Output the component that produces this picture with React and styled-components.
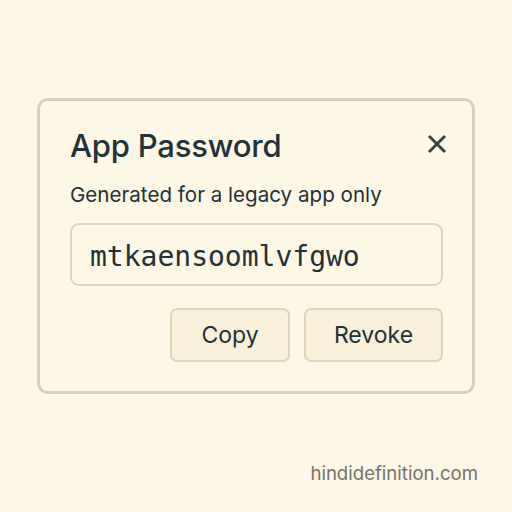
import React from 'react';
import styled, {createGlobalStyle} from "styled-components";

const GlobalStyle = createGlobalStyle`
    html, body {
        margin: 0;
        padding: 0;
        background: #fcf7e6;
    }
    body {
        font-family: "Inter", "Noto Sans", sans-serif;
        color: #23313a;
    }
`

const Page = styled.div`
    width: 512px;
    height: 512px;
    box-sizing: border-box;
    padding: 98px 0 0 37px;
    display: flex;
    flex-direction: column;
`

const Dialog = styled.div`
    width: 438px;
    height: 296px;
    box-sizing: border-box;
    border: 3px solid #d8d0b9;
    border-radius: 11px;
    background: #fdf7e5;
    padding: 22px 30px 0 30px;
    display: flex;
    flex-direction: column;
`

const Header = styled.div`
    display: flex;
    align-items: center;
    justify-content: space-between;
    height: 44px;
`

const Title = styled.h2`
    margin: 0;
    font-size: 31px;
    font-weight: 500;
    letter-spacing: -0.2px;
`

const CloseButton = styled.button`
    border: none;
    background: none;
    padding: 0;
    margin-right: -5px;
    margin-top: -3px;
    width: 20px;
    height: 20px;
    display: flex;
    cursor: pointer;
`

const Subtitle = styled.p`
    margin: 15px 0 0 0;
    font-size: 20.6px;
    line-height: 25px;
`

const PasswordBox = styled.div`
    margin-top: 16px;
    width: 373px;
    height: 63px;
    box-sizing: border-box;
    border: 2px solid #ddd5be;
    border-radius: 9px;
    display: flex;
    align-items: center;
    padding: 3px 0 0 18px;
    font-family: "DejaVu Sans Mono", monospace;
    font-size: 28px;
`

const Actions = styled.div`
    display: flex;
    justify-content: flex-end;
    gap: 14px;
    margin-top: 22px;
    width: 373px;
`

const ActionButton = styled.button`
    width: ${p => p.w}px;
    height: 54px;
    box-sizing: border-box;
    border: 2px solid #ddd4bc;
    border-radius: 7px;
    background: #f9f0da;
    font-family: "Inter", "Noto Sans", sans-serif;
    font-size: 23px;
    color: #23313a;
    cursor: pointer;
`

const Footer = styled.div`
    margin-top: 68px;
    width: 441px;
    text-align: right;
    font-size: 18.6px;
    color: #75736b;
`

const CloseIcon = () => (
    <svg width="20" height="20" viewBox="0 0 20 20">
        <path d="M2 2 L18 18 M18 2 L2 18" stroke="#3a4448" strokeWidth="3" strokeLinecap="butt"/>
    </svg>
)

let App = () => {
    return (
        <>
            <GlobalStyle/>
            <Page>
                <Dialog>
                    <Header>
                        <Title>App Password</Title>
                        <CloseButton aria-label="Close"><CloseIcon/></CloseButton>
                    </Header>
                    <Subtitle>Generated for a legacy app only</Subtitle>
                    <PasswordBox>mtkaensoomlvfgwo</PasswordBox>
                    <Actions>
                        <ActionButton w={120}>Copy</ActionButton>
                        <ActionButton w={139}>Revoke</ActionButton>
                    </Actions>
                </Dialog>
                <Footer>hindidefinition.com</Footer>
            </Page>
        </>
    );
};

export default App;
